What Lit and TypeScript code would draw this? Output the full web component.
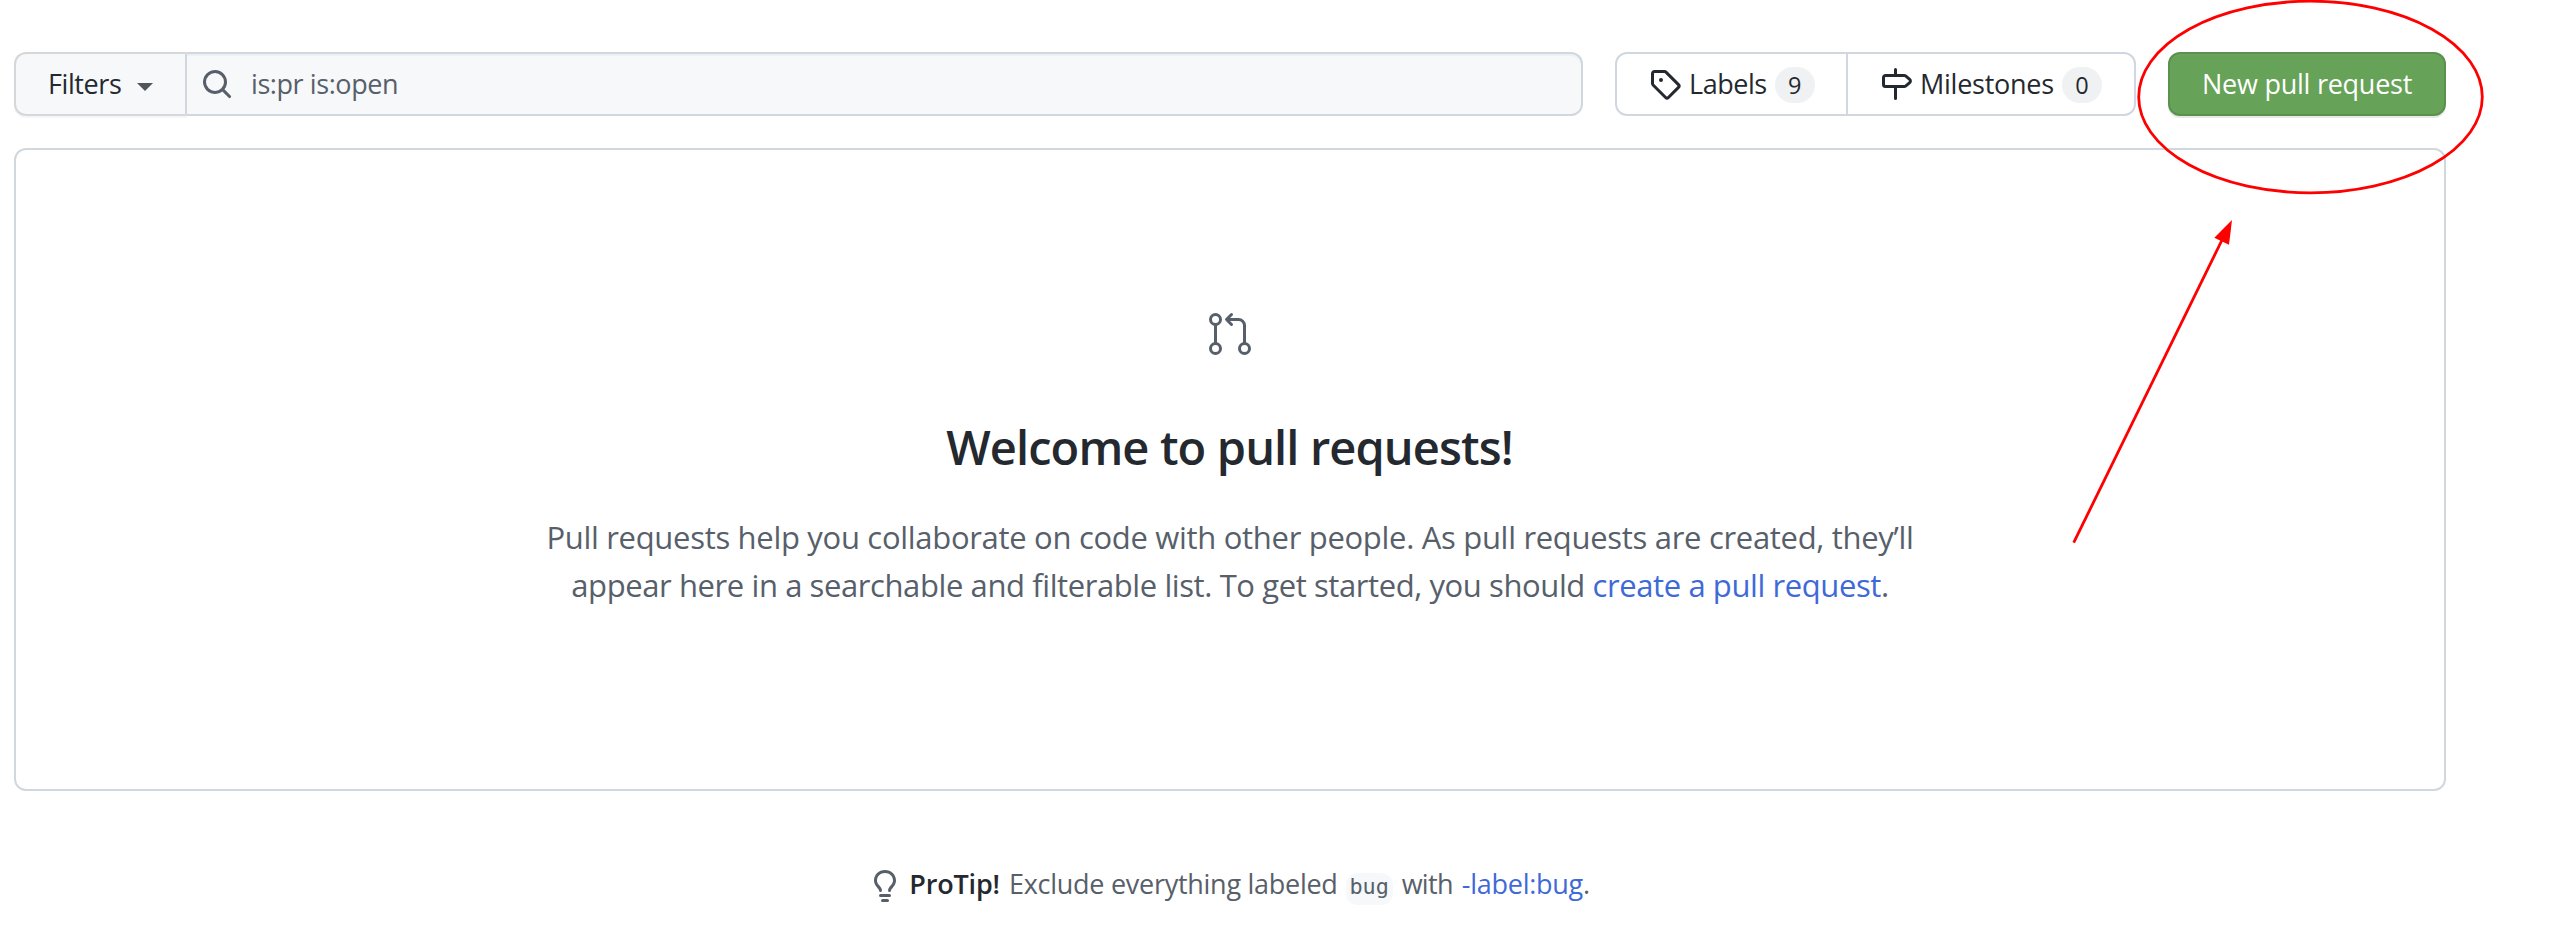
import { LitElement, html, css, svg } from "lit";
import { customElement } from "lit/decorators.js";

const icons = {
  search: svg`<path fill-rule="evenodd" d="M11.5 7a4.499 4.499 0 11-8.998 0A4.499 4.499 0 0111.5 7zm-.82 4.74a6 6 0 111.06-1.06l3.04 3.04a.75.75 0 11-1.06 1.06l-3.04-3.04z"/>`,
  tag: svg`<path fill-rule="evenodd" d="M2.5 7.775V2.75a.25.25 0 01.25-.25h5.025a.25.25 0 01.177.073l6.25 6.25a.25.25 0 010 .354l-5.025 5.025a.25.25 0 01-.354 0l-6.25-6.25a.25.25 0 01-.073-.177zm-1.5 0V2.75C1 1.784 1.784 1 2.75 1h5.025c.464 0 .91.184 1.238.513l6.25 6.25a1.75 1.75 0 010 2.474l-5.026 5.026a1.75 1.75 0 01-2.474 0l-6.25-6.25A1.75 1.75 0 011 7.775zM6 5a1 1 0 100 2 1 1 0 000-2z"/>`,
  milestone: svg`<path fill-rule="evenodd" d="M7.75 0a.75.75 0 01.75.75V3h3.634c.414 0 .814.147 1.13.414l2.07 1.75a1.75 1.75 0 010 2.672l-2.07 1.75a1.75 1.75 0 01-1.13.414H8.5v5.25a.75.75 0 11-1.5 0V10H2.75A1.75 1.75 0 011 8.25v-3.5C1 3.784 1.784 3 2.75 3H7V.75A.75.75 0 017.75 0zm0 8.5h4.384a.25.25 0 00.161-.06l2.07-1.75a.25.25 0 000-.38l-2.07-1.75a.25.25 0 00-.161-.06H2.75a.25.25 0 00-.25.25v3.5c0 .138.112.25.25.25h5z"/>`,
  bulb: svg`<path fill-rule="evenodd" d="M8 1.5c-2.363 0-4 1.69-4 3.75 0 .984.424 1.625.984 2.304l.214.253c.223.264.47.556.673.848.284.411.537.896.621 1.49a.75.75 0 01-1.484.211c-.04-.282-.163-.547-.37-.847a8.695 8.695 0 00-.542-.68c-.084-.1-.173-.205-.268-.32C3.201 7.75 2.5 6.766 2.5 5.25 2.5 2.31 4.863 0 8 0s5.5 2.31 5.5 5.25c0 1.516-.701 2.5-1.328 3.259-.095.115-.184.22-.268.319-.207.245-.383.453-.541.681-.208.3-.33.565-.37.847a.75.75 0 01-1.485-.212c.084-.593.337-1.078.621-1.489.203-.292.45-.584.673-.848.075-.088.147-.173.213-.253.561-.679.985-1.32.985-2.304 0-2.06-1.637-3.75-4-3.75zM6 15.25a.75.75 0 01.75-.75h2.5a.75.75 0 010 1.5h-2.5a.75.75 0 01-.75-.75zM5.75 12a.75.75 0 000 1.5h4.5a.75.75 0 000-1.5h-4.5z"/>`,
};

const icon = (shape: unknown, cls: string) =>
  html`<svg class="icon ${cls}" viewBox="0 0 16 16" fill="currentColor">${shape}</svg>`;

@customElement("app-root")
export class AppRoot extends LitElement {
  static styles = css`
    :host {
      display: block;
      position: relative;
      box-sizing: border-box;
      width: 2549px;
      height: 951px;
      padding: 52px 103px 0 14px;
      overflow: hidden;
      background: #fff;
      color: #24292f;
      font: 27px/42px "Open Sans", "Noto Sans", sans-serif;
      white-space: nowrap;
    }
    * { box-sizing: border-box; }
    .icon { width: 32px; height: 32px; flex: none; display: block; }
    .toolbar { display: flex; height: 64px; }
    .filters {
      display: flex;
      align-items: center;
      width: 173px;
      padding-left: 32px;
      background: #f6f8fa;
      border: 2px solid #d5d8da;
      border-right-color: #d0d7de;
      border-radius: 12px 0 0 12px;
      box-shadow: 0 2px 0 rgba(27, 31, 36, 0.04);
      letter-spacing: -0.4px;
    }
    .caret {
      margin: 6px 0 0 16px;
      border: 8px solid transparent;
      border-top-color: #4f555b;
      border-bottom: 0;
    }
    .search {
      display: flex;
      align-items: center;
      flex: 1;
      padding-left: 14px;
      background: #f6f8fa;
      border: 2px solid #d0d7de;
      border-left: 0;
      border-radius: 0 12px 12px 0;
      box-shadow: inset 0 2px 0 rgba(208, 215, 222, 0.2);
      color: #57606a;
      letter-spacing: -0.42px;
    }
    .query { margin-left: 18px; }
    .links {
      display: flex;
      width: 521px;
      margin: 0 32px;
      border: 2px solid #d0d7de;
      border-radius: 12px;
    }
    .link { display: flex; align-items: center; padding-left: 32px; }
    .labels { width: 231px; border-right: 2px solid #d0d7de; letter-spacing: -0.46px; }
    .milestones { letter-spacing: -0.25px; }
    .name { margin: 0 8px; }
    .count {
      width: 40px;
      height: 36px;
      margin-top: 2px;
      border-radius: 18px;
      background: #eff1f3;
      font-size: 23.5px;
      line-height: 36px;
      letter-spacing: 0;
      text-align: center;
    }
    .create {
      width: 278px;
      padding-left: 32px;
      line-height: 60px;
      color: #fff;
      background: #66a257;
      border: 2px solid #5a914d;
      border-radius: 12px;
      box-shadow: 0 2px 0 rgba(27, 31, 36, 0.1), inset 0 2px 0 rgba(255, 255, 255, 0.03);
      letter-spacing: -0.25px;
    }
    .panel {
      display: flex;
      flex-direction: column;
      align-items: center;
      height: 643px;
      margin-top: 32px;
      padding-top: 160px;
      border: 2px solid #d0d7de;
      border-radius: 12px;
    }
    .pr { width: 48px; height: 48px; color: #57606a; }
    h1 {
      margin: 53px 1px 0 0;
      font-size: 47px;
      font-weight: 600;
      line-height: 72px;
      letter-spacing: -0.88px;
    }
    .copy {
      display: flex;
      flex-direction: column;
      align-items: center;
      margin-top: 30px;
      font-size: 31px;
      line-height: 48px;
      color: #57606a;
    }
    .first { letter-spacing: -0.305px; }
    .second { letter-spacing: -0.406px; }
    a { color: #4069d8; text-decoration: none; }
    .tip {
      display: flex;
      justify-content: center;
      gap: 9px;
      margin-top: 72px;
      color: #57606a;
      letter-spacing: -0.27px;
    }
    .bulb { margin: 7px -1px 0 -1px; }
    .tip strong { font-weight: 600; color: #24292f; letter-spacing: -0.15px; }
    .with { letter-spacing: -0.68px; }
    code {
      height: 32px;
      width: 47px;
      margin: 10px 0 0 -1px;
      text-align: center;
      font: 21.8px/27px "DejaVu Sans Mono", monospace;
      letter-spacing: 0;
      background: #f6f8fa;
      border-radius: 12px;
    }
    .markup { position: absolute; inset: 0; width: 2549px; height: 951px; pointer-events: none; }
  `;

  render() {
    return html`
      <div class="toolbar">
        <div class="filters"><span>Filters</span><i class="caret"></i></div>
        <div class="search">${icon(icons.search, "")}<span class="query">is:pr is:open</span></div>
        <div class="links">
          <div class="link labels">${icon(icons.tag, "")}<span class="name">Labels</span><span class="count">9</span></div>
          <div class="link milestones">${icon(icons.milestone, "")}<span class="name">Milestones</span><span class="count">0</span></div>
        </div>
        <div class="create">New pull request</div>
      </div>
      <div class="panel">
        <svg class="pr" viewBox="0 0 24 24" fill="none" stroke="currentColor" stroke-width="1.5" stroke-linecap="round" stroke-linejoin="round">
          <circle cx="4.75" cy="4.75" r="2.5"/><circle cx="4.75" cy="19.25" r="2.5"/><circle cx="19.25" cy="19.25" r="2.5"/>
          <path d="M4.75 7.5v9M19.25 16.5V7.75a3 3 0 0 0-3-3H10.4M12.75 2.25l-2.5 2.5 2.5 2.5"/>
        </svg>
        <h1>Welcome to pull requests!</h1>
        <div class="copy">
          <span class="first">Pull requests help you collaborate on code with other people. As pull requests are created, they’ll</span>
          <span class="second">appear here in a searchable and filterable list. To get started, you should <a>create a pull request</a>.</span>
        </div>
      </div>
      <div class="tip">
        ${icon(icons.bulb, "bulb")}<strong>ProTip!</strong><span>Exclude everything labeled</span><code>bug</code><span class="with">with</span><span><a>-label:bug</a>.</span>
      </div>
      <svg class="markup" viewBox="0 0 2549 951" fill="none" stroke="#f00" stroke-width="2.8">
        <ellipse cx="2310.5" cy="97" rx="171.8" ry="95.8"/>
        <path d="M2073.7 542.7L2222 240"/>
        <path fill="#f00" stroke="none" d="M2232 220L2214.3 237.8L2229 244.8Z"/>
      </svg>
    `;
  }
}
